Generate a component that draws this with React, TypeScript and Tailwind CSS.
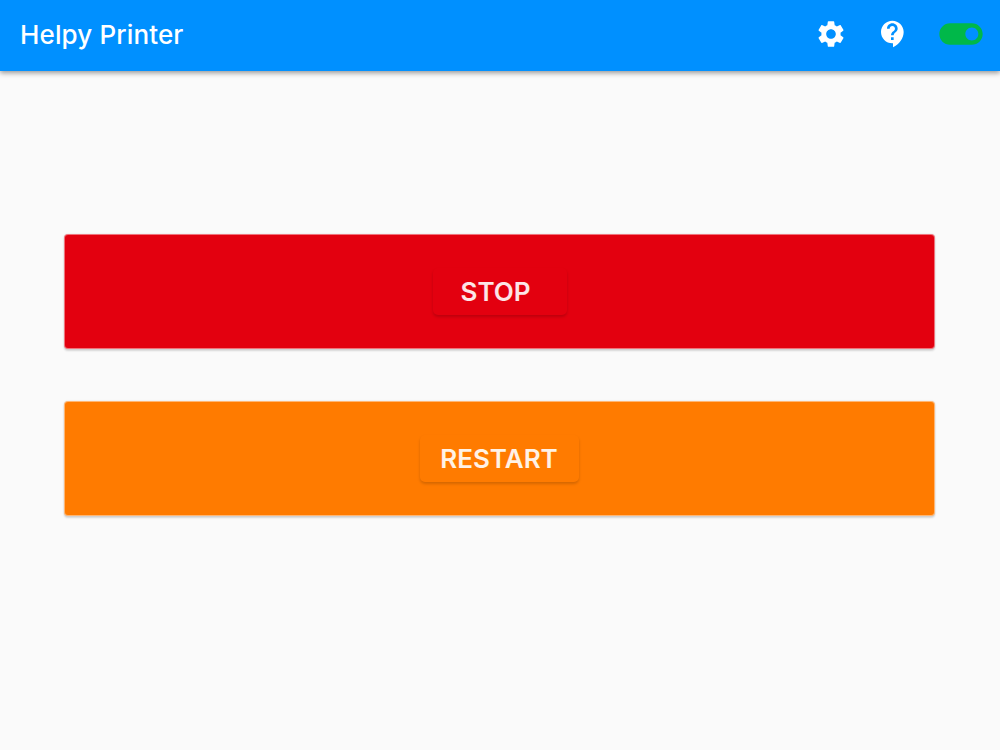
interface ActionCardProps {
  label: string;
  className: string;
  buttonClassName: string;
}

const SettingsIcon = () => (
  <svg viewBox="0 0 24 24" fill="currentColor" className="size-[32px]">
    <path d="M19.14 12.94c.04-.3.06-.61.06-.94 0-.32-.02-.64-.07-.94l2.03-1.58c.18-.14.23-.41.12-.61l-1.92-3.32c-.12-.22-.37-.29-.59-.22l-2.39.96c-.5-.38-1.03-.7-1.62-.94l-.36-2.54c-.04-.24-.24-.41-.48-.41h-3.84c-.24 0-.43.17-.47.41l-.36 2.54c-.59.24-1.13.57-1.62.94l-2.39-.96c-.22-.08-.47 0-.59.22L2.74 8.87c-.12.21-.08.47.12.61l2.03 1.58c-.05.3-.09.63-.09.94s.02.64.07.94l-2.03 1.58c-.18.14-.23.41-.12.61l1.92 3.32c.12.22.37.29.59.22l2.39-.96c.5.38 1.03.7 1.62.94l.36 2.54c.05.24.24.41.48.41h3.84c.24 0 .44-.17.47-.41l.36-2.54c.59-.24 1.13-.56 1.62-.94l2.39.96c.22.08.47 0 .59-.22l1.92-3.32c.12-.22.07-.47-.12-.61l-2.01-1.58zM12 15.6c-1.98 0-3.6-1.62-3.6-3.6s1.62-3.6 3.6-3.6 3.6 1.62 3.6 3.6-1.62 3.6-3.6 3.6z" />
  </svg>
);

const SupportIcon = () => (
  <svg viewBox="0 0 24 24" fill="currentColor" className="size-[32px]">
    <path d="M11.5 2C6.81 2 3 5.81 3 10.5S6.81 19 11.5 19h.5v3c4.86-2.34 8-7 8-11.5C20 5.81 16.19 2 11.5 2zm1 14.5h-2v-2h2v2zm0-3.5h-2c0-3.25 3-3 3-5 0-1.1-.9-2-2-2s-2 .9-2 2h-2c0-2.21 1.79-4 4-4s4 1.79 4 4c0 2.5-3 2.75-3 5z" />
  </svg>
);

const ToggleIcon = () => (
  <svg viewBox="0 0 24 24" fill="currentColor" className="size-[52px] text-[#00b849]">
    <path d="M17 7H7c-2.76 0-5 2.24-5 5s2.24 5 5 5h10c2.76 0 5-2.24 5-5s-2.24-5-5-5zm0 8c-1.66 0-3-1.34-3-3s1.34-3 3-3 3 1.34 3 3-1.34 3-3 3z" />
  </svg>
);

const ActionCard = ({ label, className, buttonClassName }: ActionCardProps) => (
  <div
    className={`flex h-[115px] items-center justify-center rounded-[4px] border border-white/45 shadow-[0_2px_2px_rgba(0,0,0,0.14),0_0_2px_rgba(0,0,0,0.12)] ${className}`}
  >
    <button
      type="button"
      className={`h-[47px] rounded-[5px] pb-px text-[26px] font-semibold text-white/90 shadow-[0_2px_3px_rgba(0,0,0,0.17)] ${buttonClassName}`}
    >
      {label}
    </button>
  </div>
);

const App = () => {
  return (
    <div className="h-screen overflow-hidden bg-[#fafafa] font-['Inter',sans-serif]">
      <header className="flex h-[71px] items-center bg-[#0090ff] pr-[13px] pb-[3px] pl-[20px] text-white shadow-[0_2px_5px_rgba(0,0,0,0.4)]">
        <h1 className="flex-1 text-[26px] font-medium tracking-[0.13px]">Helpy Printer</h1>
        <button type="button" aria-label="Settings" className="mr-[30px]">
          <SettingsIcon />
        </button>
        <button type="button" aria-label="Support" className="mr-[26px]">
          <SupportIcon />
        </button>
        <button type="button" aria-label="Toggle printer">
          <ToggleIcon />
        </button>
      </header>

      <main className="flex flex-col gap-[52px] pt-[163px] pr-[65px] pl-[64px]">
        <ActionCard label="STOP" className="bg-[#e3000f]" buttonClassName="w-[134px] pr-[8px]" />
        <ActionCard label="RESTART" className="bg-[#ff7b00]" buttonClassName="w-[159px] pr-px" />
      </main>
    </div>
  );
};

export default App;
